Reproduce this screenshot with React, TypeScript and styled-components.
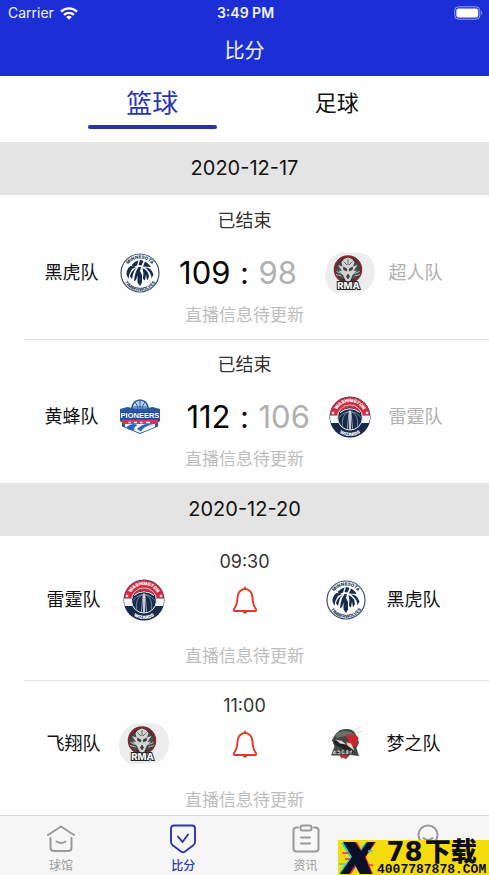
import React, { useId, useState } from "react";
import styled, { createGlobalStyle } from "styled-components";

const GlobalStyle = createGlobalStyle`
  *, *::before, *::after { box-sizing: border-box; }
  body {
    margin: 0;
    background: #fefefe;
    color: #111;
    font-family: Inter, "Noto Sans CJK SC", sans-serif;
  }
  button { font: inherit; color: inherit; background: none; border: 0; padding: 0; cursor: pointer; }
  h1, h2, p { margin: 0; font-weight: 400; }
  svg { display: block; }
`;

const Page = styled.div`
  position: relative;
  display: flex;
  flex-direction: column;
  height: 100vh;
`;

const Header = styled.header`
  flex: none;
  background: #1c2fd6;
  color: #f2f4ff;
`;

const StatusBar = styled.div`
  display: grid;
  grid-template-columns: 1fr auto 1fr;
  align-items: center;
  height: 26px;
  padding: 0 6px 0 8px;
  font-size: 14px;
  line-height: 20px;
`;

const Carrier = styled.span`
  display: flex;
  align-items: center;
  gap: 6px;
`;

const Clock = styled.span`
  font-weight: 600;
`;

const Battery = styled.span`
  justify-self: end;
`;

const Title = styled.h1`
  height: 50px;
  font-size: 20px;
  line-height: 50px;
  text-align: center;
`;

const SportTabs = styled.div`
  flex: none;
  display: grid;
  grid-template-columns: 1fr 1fr;
  height: 66px;
  padding: 0 60px;
`;

const SportTab = styled.button<{ $active: boolean }>`
  display: flex;
  flex-direction: column;
  align-items: center;
  && { color: ${(p) => (p.$active ? "#2a35b4" : "#111")}; }
  && { padding-top: 6px; }
  font-size: ${(p) => (p.$active ? 26 : 22)}px;
  line-height: 43px;

  &::after {
    content: "";
    width: 70%;
    height: 4px;
    border-radius: 2px;
    background: ${(p) => (p.$active ? "#2632a8" : "transparent")};
  }
`;

const Schedule = styled.main`
  flex: 1;
  min-height: 0;
  overflow-y: auto;
  scrollbar-width: none;
`;

const DateBar = styled.h2`
  height: 53px;
  background: #e4e4e4;
  font-size: 20px;
  line-height: 53px;
  text-align: center;
`;

const MatchList = styled.ul`
  list-style: none;
  margin: 0;
  padding: 0;
`;

const MatchItem = styled.li`
  display: flex;
  flex-direction: column;
  height: 144px;
  padding-top: 14px;

  & + &::before {
    content: "";
    height: 1px;
    margin: -14px 0 13px 24px;
    background: #e2e2e2;
  }
`;

const Status = styled.p`
  flex: none;
  color: #333;
  font-size: 18px;
  line-height: 24px;
  text-align: center;
`;

const Teams = styled.div<{ $finished: boolean }>`
  flex: none;
  display: grid;
  grid-template-columns: ${(p) =>
    p.$finished ? "1fr 78px 132px 78px 1fr" : "1fr 82px 120px 82px 1fr"};
  align-items: center;
  justify-items: center;
  height: 48px;
  margin: ${(p) => (p.$finished ? "16px 0 6px" : "2px 0 20px")};
`;

const TeamName = styled.span<{ $side: "left" | "right"; $muted?: boolean }>`
  justify-self: ${(p) => (p.$side === "left" ? "end" : "start")};
  padding-right: ${(p) => (p.$side === "left" ? 2 : 0)}px;
  color: ${(p) => (p.$muted ? "#b0b0b0" : "#111")};
  font-size: 18px;
  line-height: 24px;
`;

const Score = styled.div`
  display: grid;
  grid-template-columns: 1fr 28px 1fr;
  width: 100%;
  font-size: 31px;
  line-height: 40px;
  text-align: center;
`;

const Points = styled.span<{ $side: "left" | "right"; $muted?: boolean }>`
  justify-self: ${(p) => (p.$side === "left" ? "end" : "start")};
  color: ${(p) => (p.$muted ? "#b0b0b0" : "#050505")};
`;

const LiveNote = styled.p`
  flex: none;
  color: #bdbdbd;
  font-size: 17px;
  line-height: 24px;
  text-align: center;
`;

const TabBar = styled.nav`
  flex: none;
  display: grid;
  grid-template-columns: repeat(4, 1fr);
  height: 60px;
  border-top: 1px solid #dcdcdc;
  background: #f6f6f7;
`;

const TabLink = styled.a<{ $active?: boolean }>`
  display: flex;
  flex-direction: column;
  align-items: center;
  gap: 4px;
  padding-top: 8px;
  color: ${(p) => (p.$active ? "#2a35b4" : "#999")};
  font-size: 12px;
  font-weight: ${(p) => (p.$active ? 500 : 400)};
  line-height: 16px;
  text-decoration: none;
`;

const Sticker = styled.aside`
  position: absolute;
  right: 0;
  bottom: 0;
  display: flex;
  align-items: center;
  width: 151px;
  height: 35px;
  background: #f4dc0c;
  color: #0b0b1a;
`;

const StickerText = styled.div`
  display: flex;
  flex-direction: column;
  align-items: center;
  font-weight: 900;
  white-space: nowrap;
`;

const StickerName = styled.span`
  display: flex;
  align-items: center;
  font-size: 26px;
  line-height: 24px;
`;

const StickerDigits = styled.span`
  padding-right: 2px;
  font-family: "DejaVu Sans", sans-serif;
  font-weight: 700;
`;

const StickerSite = styled.span`
  font-family: "Liberation Mono", monospace;
  font-size: 13px;
  font-weight: 700;
  line-height: 11px;
`;

const WifiIcon = () => (
  <svg width="18" height="13" viewBox="0 0 18 13" fill="none" stroke="#fff" strokeWidth="2.3" aria-hidden="true">
    <path d="M1 4.6a11.6 11.6 0 0 1 16 0" />
    <path d="M4 7.8a7.2 7.2 0 0 1 10 0" />
    <path d="M9 12.8 6.2 10a4 4 0 0 1 5.6 0Z" fill="#fff" stroke="none" />
  </svg>
);

const BatteryIcon = () => (
  <svg width="29" height="14" viewBox="0 0 29 14" aria-label="Battery">
    <rect x="0.8" y="0.8" width="25" height="12.4" rx="3.6" fill="none" stroke="#98a4f0" />
    <rect x="2.4" y="2.4" width="21.8" height="9.2" rx="2.2" fill="#fff" />
    <path d="M27.2 5v4c1.4-.6 1.4-3.400 0-4Z" fill="#98a4f0" />
  </svg>
);

const BellIcon = () => (
  <svg width="26" height="28" viewBox="0 0 26 28" fill="none" stroke="#dc3b25" strokeWidth="1.9" strokeLinejoin="round" strokeLinecap="round" aria-hidden="true">
    <path d="M13 1.500v1.200M9.500 4.100C10.500 2.600 15.500 2.600 16.500 4.100C19.300 5.500 20.200 8 20.400 11C20.600 17 21.500 20 24 23.300Q24.600 25 23 25H3Q1.400 25 2 23.300C4.500 20 5.400 17 5.600 11C5.800 8 6.700 5.500 9.500 4.100Z" />
    <path d="M12.200 26.500h1.600" strokeWidth="2.200" />
  </svg>
);

const WolvesLogo = () => {
  const id = useId();
  return (
    <svg width="40" height="40" viewBox="0 0 80 80" aria-hidden="true">
      <defs>
        <path id={`${id}t`} d="M11 40a29 29 0 0 1 58 0" />
        <path id={`${id}b`} d="M4 40a36 36 0 0 0 72 0" />
      </defs>
      <circle cx="40" cy="40" r="38" fill="#fff" stroke="#40546f" strokeWidth="2.400" />
      <g fill="#263b59" fontSize="9" fontWeight="800" textAnchor="middle">
        <text><textPath href={`#${id}t`} startOffset="50%">MINNESOTA</textPath></text>
        <text><textPath href={`#${id}b`} startOffset="50%">TIMBERWOLVES</textPath></text>
      </g>
      <g fill="#142c4d">
        <path d="M24 23q7-7 13-8l-3 10-9 4Z" />
        <path d="M40 14q4 0 7 2l-4 9-6-1Z" />
        <path d="M50 17q9 5 11 11l-15-1Z" />
        <path d="M32 28 24 32Q17 42 17 52L13 43Q13 31 21 26Z" />
        <path d="M33 30q-6 6-7 13l-2 9-4-5q1-10 13-17Z" />
        <path d="M37 28h5l-2 8 4 8v15l-4 7-5-7V45l-3 9-4 3q1-18 9-29Z" />
        <path d="M45 30q12 5 13 18l-4 7-2-12-2 12-4-3q2-13-1-22Z" />
        <path d="M50 29q12-1 17 14l-4 8q0-12-13-22Z" />
      </g>
    </svg>
  );
};

const WizardsLogo = () => {
  const id = useId();
  return (
    <svg width="42" height="42" viewBox="0 0 84 84" aria-hidden="true">
      <defs>
        <path id={`${id}t`} d="M12 42a30 30 0 0 1 60 0" />
        <path id={`${id}b`} d="M4 42a38 38 0 0 0 76 0" />
        <clipPath id={`${id}c`}><circle cx="42" cy="42" r="40" /></clipPath>
      </defs>
      <circle cx="42" cy="42" r="41" fill="#1b2c4f" />
      <g clipPath={`url(#${id}c)`}>
        <path d="M0 0h84v39H0Z" fill="#d52d40" />
        <path d="M0 39h84v15H0Z" fill="#f8f8fa" />
        <path d="M0 54h84v30H0Z" fill="#172a4b" />
      </g>
      <g fill="#fff" fontSize="9" fontWeight="900" textAnchor="middle">
        <text><textPath href={`#${id}t`} startOffset="50%">WASHINGTON</textPath></text>
        <text><textPath href={`#${id}b`} startOffset="50%">WIZARDS</textPath></text>
      </g>
      <g fill="#fff">
        <path d="m8 30 1 2.500h3l-2.300 1.700.9 3-2.600-1.800-2.600 1.800.9-3L4 32.500h3Z" />
        <path d="m76 30 1 2.500h3l-2.300 1.700.9 3-2.600-1.800-2.600 1.800.9-3-2.300-1.700h3Z" />
      </g>
      <circle cx="42" cy="43" r="25" fill="#162a4a" stroke="#f5f6f8" strokeWidth="2" />
      <g fill="none">
        <path d="M24 29q18-16 36 0" stroke="#d52d40" strokeWidth="4" />
        <path d="M22 33q20-15 40 0" stroke="#f5f6f8" strokeWidth="2" />
        <path d="M39 31Q24 39 27 61M45 31Q60 39 57 61M18 45q9-13 22-14M66 45q-9-13-22-14" stroke="#94a4bd" strokeWidth="1.500" />
        <path d="M42 29v38" stroke="#f8f8fa" strokeWidth="3" />
        <path d="m37 65 3-34M47 65l-3-34" stroke="#f8f8fa" strokeWidth="1.200" />
      </g>
    </svg>
  );
};

const RmaLogo = () => (
  <svg width="52" height="44" viewBox="0 0 104 88" aria-hidden="true">
    <path d="M34 3H72Q102 10 102 43 100 73 76 82L29 85Q2 78 2 45 5 13 34 3Z" fill="#ededed" />
    <circle cx="48" cy="37" r="26" fill="#292b2e" stroke="#792b30" strokeWidth="5" />
    <path d="M24 40q1-21 24-23 23 2 24 23l-9 16H33Z" fill="#454c4e" />
    <path d="m35 22 5-6 8-3 8 3 5 6-3 9 9-3-8 12 7-1-9 9-5 13h-8l-6-13-9-9 7 1-8-12 9 3Z" fill="#d3d3d0" />
    <path d="m39 32 7 4-1 4-6-3ZM57 32l-7 4 1 4 6-3ZM45 51l3-5 3 5-3 5ZM39 21l7 7M57 21l-7 7M48 16v12" fill="#3b3b3d" stroke="#444" strokeWidth="1.500" />
    <path d="m25 41 10 4M24 47l11 3M71 41l-10 4M72 47l-11 3" stroke="#b6baba" strokeWidth="2" />
    <text x="49" y="75" textAnchor="middle" fontSize="19" fontWeight="800" fill="#f4f4f4" stroke="#202224" strokeWidth="4" paintOrder="stroke">RMA</text>
  </svg>
);

const PioneersLogo = () => (
  <svg width="42" height="36" viewBox="0 0 84 72" aria-hidden="true">
    <circle cx="42" cy="18" r="16" fill="#bcd4ee" stroke="#2c59a4" strokeWidth="3" />
    <path d="M26 16h32M42 2v20M32 6q7 8 6 18M52 6q-7 8-6 18" fill="none" stroke="#2c59a4" strokeWidth="2" />
    <path d="M2 20 17 16q25 7 50 0l15 4v24l-4 3v8L42 70 6 55v-8l-4-3Z" fill="#2955a1" />
    <path d="M5 42h74l-4 9H9Z" fill="#d9345c" />
    <path d="M12 50h60v6L42 68 12 56Z" fill="#f4f8fd" />
    <path d="M15 56q11-9 22-4-12 7-4 11Q15 62 15 56ZM36 60q14-15 33-8-17-1-25 13Z" fill="#2b66b3" />
    <path d="M19 47h5M30 47h6M42 47h5M54 47h8" stroke="#fff" strokeWidth="3" />
    <text x="42" y="37" textAnchor="middle" fontFamily="Liberation Sans" fontSize="15" fontWeight="700" fill="#fff" stroke="#234891" strokeWidth="3" paintOrder="stroke">PIONEERS</text>
  </svg>
);

const DreamLogo = () => (
  <svg width="36" height="36" viewBox="0 0 72 72" aria-hidden="true">
    <path d="m1 34 16-11M52 10 66 1M57 15l13-5M1 27l13-8" stroke="#dadada" strokeWidth="2" />
    <path d="M14 18Q22 4 40 6 54 8 57 20L62 33 57 44 62 60 44 58 35 66 24 59 6 59 13 41 8 28Z" fill="#424743" />
    <path d="M14 18Q30 3 55 17L39 19 18 24Z" fill="#68716b" />
    <path d="M34 18q19-5 27 5l-3 16-11 4 8 7-22-15 9-6Z" fill="#c62931" />
    <path d="m11 29 14 2 13 8 17 16-25-9-16-9Z" fill="#202323" />
    <path d="m15 27 13 3 8 7-12-2ZM37 33l9 2 7 14-14-10Z" fill="#d7d9d6" />
    <path d="m9 56 3-8 4 3 4-4 5 4 5-4 4 4 5-4 4 4 5-3 4 8Z" fill="#aeb2ad" />
    <path d="M15 53h8M29 52h8M43 54h10M18 48v8M26 48v8M34 48v8M42 48v8M49 48v8" stroke="#303431" strokeWidth="2" />
    <path d="m23 59 9-2 9 3-5 6-4-4-5 3Z" fill="#c62931" />
  </svg>
);

const VenueIcon = () => (
  <svg width="30" height="30" viewBox="0 0 30 30" fill="none" stroke="currentColor" strokeWidth="2" strokeLinecap="round" strokeLinejoin="round" aria-hidden="true">
    <path d="M2 11 15 2.500 28 11M4.500 14v9.500q0 3.500 3.500 3.500h14q3.500 0 3.500-3.500V14M10.500 17.500q4.500 3 9 0" />
  </svg>
);

const ScoreIcon = () => (
  <svg width="30" height="30" viewBox="0 0 30 30" fill="none" stroke="currentColor" strokeWidth="1.900" strokeLinecap="round" strokeLinejoin="round" aria-hidden="true">
    <path d="M6 1.500h18q3 0 3 3V18q0 2-2 3.500L17 27.500q-2 1.500-4 0L5 21.500Q3 20 3 18V4.500q0-3 3-3Z" />
    <path d="m10 12.500 4.500 5.500L20 10.500" />
  </svg>
);

const NewsIcon = () => (
  <svg width="30" height="30" viewBox="0 0 30 30" fill="none" stroke="currentColor" strokeWidth="2" strokeLinecap="round" strokeLinejoin="round" aria-hidden="true">
    <path d="M7 3.500H5.500q-3 0-3 3v18q0 3 3 3h19q3 0 3-3v-18q0-3-3-3H23" />
    <rect x="9.500" y="1.500" width="11" height="5" rx="2" />
    <path d="M10 13.500h9M10 19.500h9" />
  </svg>
);

const ProfileIcon = () => (
  <svg width="30" height="30" viewBox="0 0 30 30" fill="none" stroke="currentColor" strokeWidth="2" strokeLinecap="round" aria-hidden="true">
    <circle cx="15" cy="11" r="9.500" />
    <path d="M10.500 14q4.500 4 9 0M5 28q10-9 20 0" />
  </svg>
);

const StickerMark = () => (
  <svg width="39" height="35" viewBox="0 0 39 35" aria-hidden="true">
    <path d="M3 3h12l5 9 7-9h9L25 17l9 16H21l-5-9-6 9H1l11-16Z" fill="#19d9e1" />
    <path d="M7 2h12l5 9 6-9h8L28 17l7 17H24l-5-9-6 9H3l12-17Z" fill="#f32755" />
    <path d="M5 2h12l6 9 6-9h8L27 17l7 17H22l-5-9-6 9H2l12-17Z" fill="#0b1029" />
    <path d="M4 13h7M7 19h5M30 25h5" stroke="#f32755" strokeWidth="1.500" />
    <path d="M1 24h6M30 11h5" stroke="#19d9e1" strokeWidth="1.500" />
  </svg>
);

interface Team {
  name: string;
  Logo: React.ComponentType;
  points?: number;
}

interface Match {
  status: string;
  home: Team;
  away: Team;
}

const days: { date: string; matches: Match[] }[] = [
  {
    date: "2020-12-17",
    matches: [
      {
        status: "已结束",
        home: { name: "黑虎队", Logo: WolvesLogo, points: 109 },
        away: { name: "超人队", Logo: RmaLogo, points: 98 },
      },
      {
        status: "已结束",
        home: { name: "黄蜂队", Logo: PioneersLogo, points: 112 },
        away: { name: "雷霆队", Logo: WizardsLogo, points: 106 },
      },
    ],
  },
  {
    date: "2020-12-20",
    matches: [
      {
        status: "09:30",
        home: { name: "雷霆队", Logo: WizardsLogo },
        away: { name: "黑虎队", Logo: WolvesLogo },
      },
      {
        status: "11:00",
        home: { name: "飞翔队", Logo: RmaLogo },
        away: { name: "梦之队", Logo: DreamLogo },
      },
    ],
  },
];

const sports = ["篮球", "足球"];

const sections = [
  { label: "球馆", href: "#venues", Icon: VenueIcon },
  { label: "比分", href: "#scores", Icon: ScoreIcon },
  { label: "资讯", href: "#news", Icon: NewsIcon },
];

const MatchRow = ({ status, home, away }: Match) => {
  const finished = home.points !== undefined;
  return (
    <MatchItem>
      <Status>{status}</Status>
      <Teams $finished={finished}>
        <TeamName $side="left">{home.name}</TeamName>
        <home.Logo />
        {finished ? (
          <Score>
            <Points $side="left">{home.points}</Points>
            <span>:</span>
            <Points $side="right" $muted>{away.points}</Points>
          </Score>
        ) : (
          <button type="button" aria-label="提醒">
            <BellIcon />
          </button>
        )}
        <away.Logo />
        <TeamName $side="right" $muted={finished}>{away.name}</TeamName>
      </Teams>
      <LiveNote>直播信息待更新</LiveNote>
    </MatchItem>
  );
};

export default function App() {
  const [sport, setSport] = useState("篮球");
  return (
    <Page lang="zh-CN">
      <GlobalStyle />
      <Header>
        <StatusBar>
          <Carrier>Carrier <WifiIcon /></Carrier>
          <Clock>3:49 PM</Clock>
          <Battery><BatteryIcon /></Battery>
        </StatusBar>
        <Title>比分</Title>
      </Header>
      <SportTabs role="tablist">
        {sports.map((name) => (
          <SportTab
            key={name}
            type="button"
            role="tab"
            aria-selected={sport === name}
            $active={sport === name}
            onClick={() => setSport(name)}
          >
            {name}
          </SportTab>
        ))}
      </SportTabs>
      <Schedule>
        {days.map(({ date, matches }) => (
          <section key={date}>
            <DateBar>{date}</DateBar>
            <MatchList>
              {matches.map((match) => (
                <MatchRow key={match.home.name} {...match} />
              ))}
            </MatchList>
          </section>
        ))}
      </Schedule>
      <TabBar>
        {sections.map(({ label, href, Icon }) => (
          <TabLink key={label} href={href} $active={label === "比分"}>
            <Icon />
            {label}
          </TabLink>
        ))}
        <TabLink href="#me" aria-label="我的">
          <ProfileIcon />
        </TabLink>
      </TabBar>
      <Sticker>
        <StickerMark />
        <StickerText>
          <StickerName><StickerDigits>78</StickerDigits>下载</StickerName>
          <StickerSite>4007787878.COM</StickerSite>
        </StickerText>
      </Sticker>
    </Page>
  );
}
